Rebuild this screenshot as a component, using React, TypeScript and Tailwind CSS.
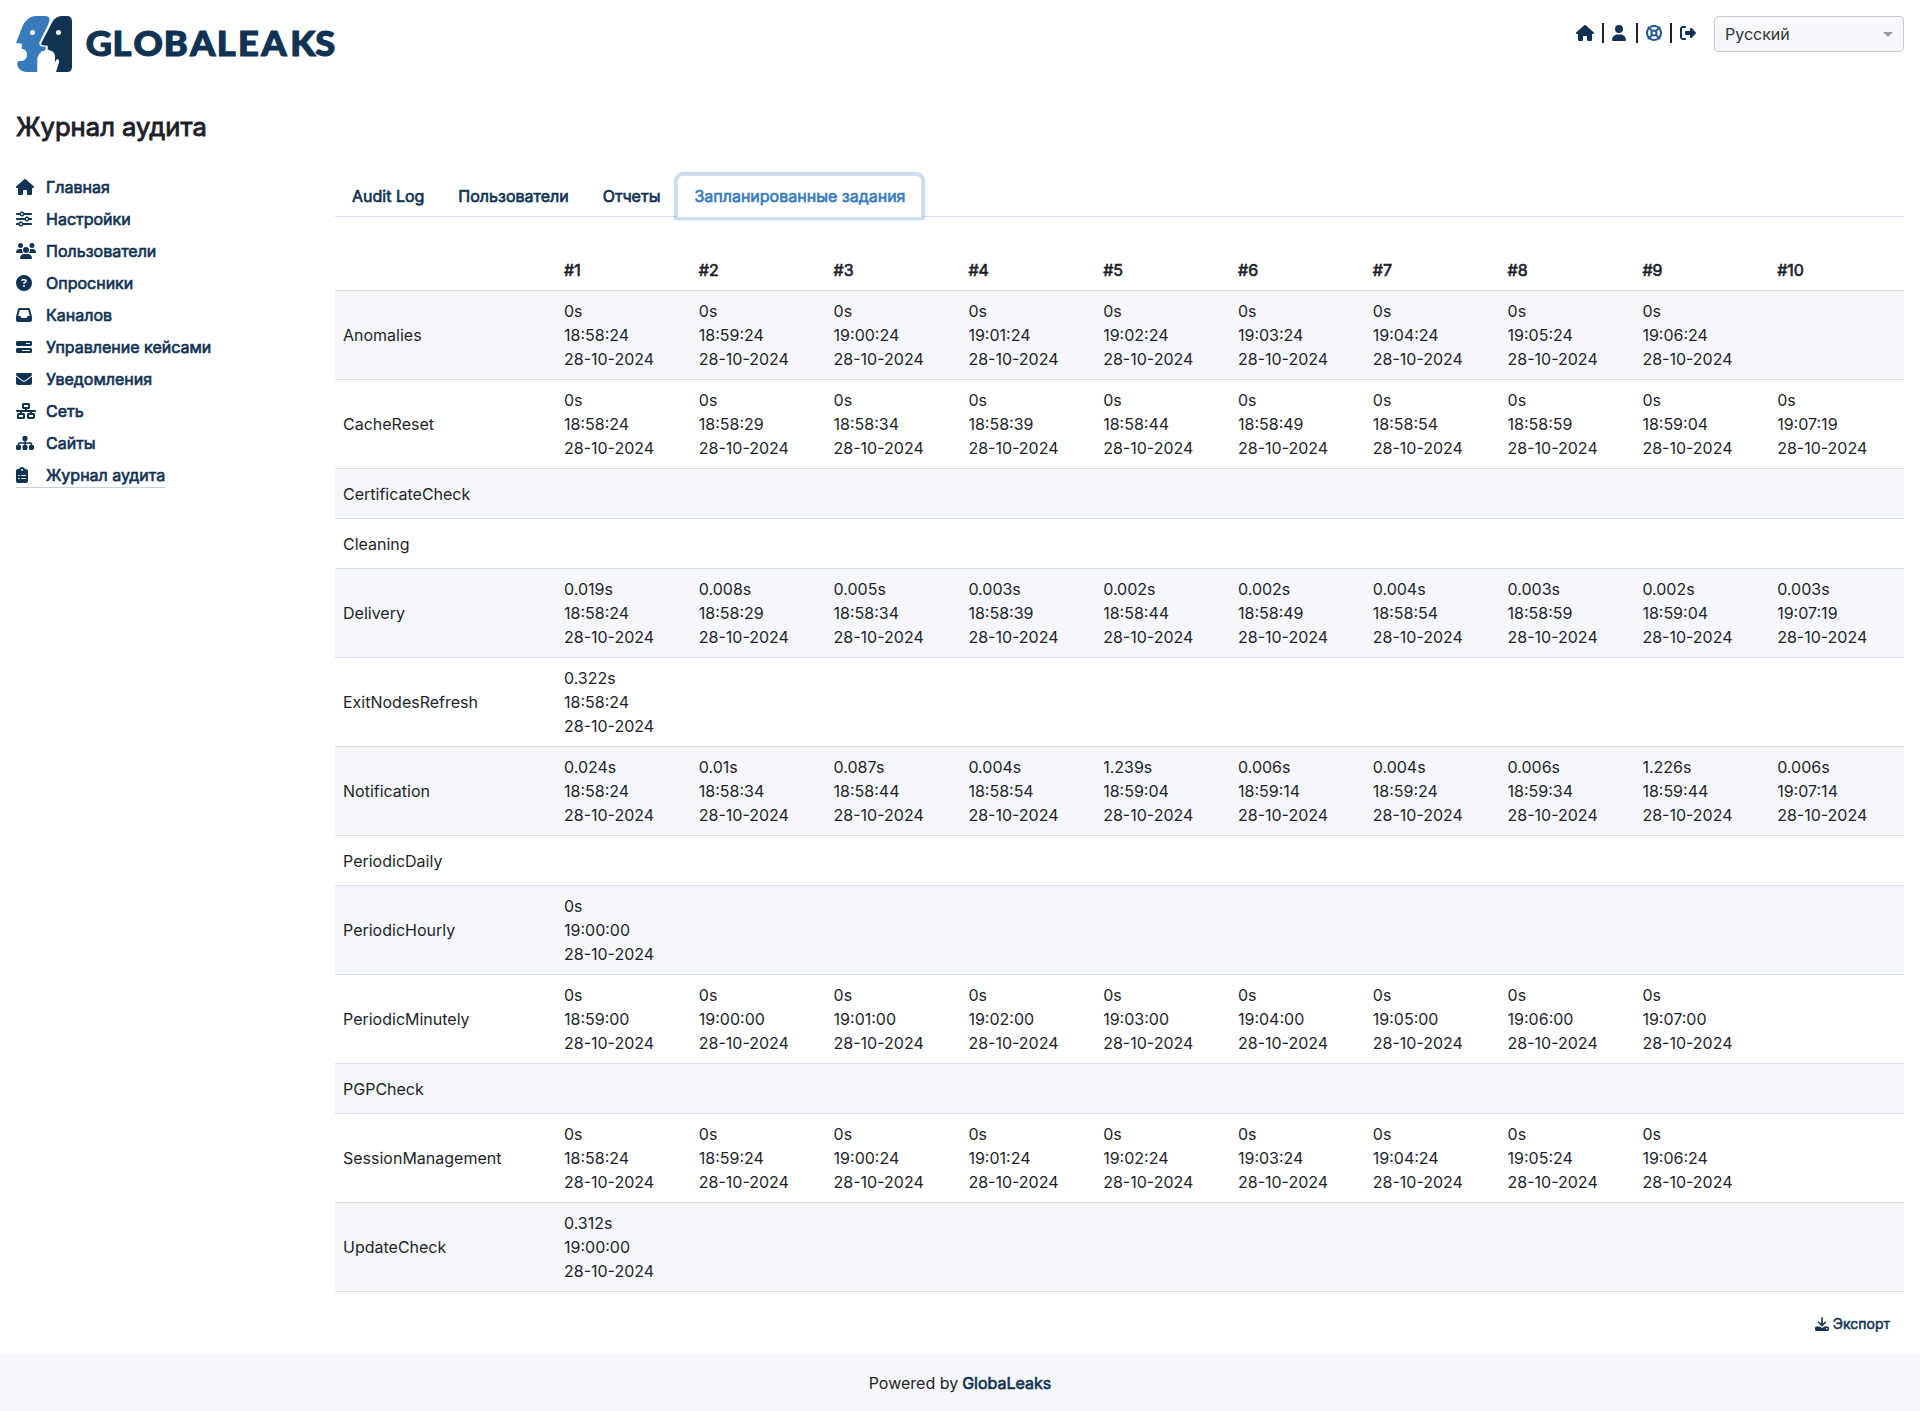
import {
  FaHouse, FaSliders, FaUsers, FaCircleQuestion, FaInbox, FaBarsProgress, FaEnvelope,
  FaNetworkWired, FaSitemap, FaClipboardList, FaUser, FaLifeRing, FaRightFromBracket,
} from "react-icons/fa6";

const D = "28-10-2024";

const rows: [string, string[]][] = [
  ["Anomalies", ["0s 18:58:24", "0s 18:59:24", "0s 19:00:24", "0s 19:01:24", "0s 19:02:24", "0s 19:03:24", "0s 19:04:24", "0s 19:05:24", "0s 19:06:24"]],
  ["CacheReset", ["0s 18:58:24", "0s 18:58:29", "0s 18:58:34", "0s 18:58:39", "0s 18:58:44", "0s 18:58:49", "0s 18:58:54", "0s 18:58:59", "0s 18:59:04", "0s 19:07:19"]],
  ["CertificateCheck", []],
  ["Cleaning", []],
  ["Delivery", ["0.019s 18:58:24", "0.008s 18:58:29", "0.005s 18:58:34", "0.003s 18:58:39", "0.002s 18:58:44", "0.002s 18:58:49", "0.004s 18:58:54", "0.003s 18:58:59", "0.002s 18:59:04", "0.003s 19:07:19"]],
  ["ExitNodesRefresh", ["0.322s 18:58:24"]],
  ["Notification", ["0.024s 18:58:24", "0.01s 18:58:34", "0.087s 18:58:44", "0.004s 18:58:54", "1.239s 18:59:04", "0.006s 18:59:14", "0.004s 18:59:24", "0.006s 18:59:34", "1.226s 18:59:44", "0.006s 19:07:14"]],
  ["PeriodicDaily", []],
  ["PeriodicHourly", ["0s 19:00:00"]],
  ["PeriodicMinutely", ["0s 18:59:00", "0s 19:00:00", "0s 19:01:00", "0s 19:02:00", "0s 19:03:00", "0s 19:04:00", "0s 19:05:00", "0s 19:06:00", "0s 19:07:00"]],
  ["PGPCheck", []],
  ["SessionManagement", ["0s 18:58:24", "0s 18:59:24", "0s 19:00:24", "0s 19:01:24", "0s 19:02:24", "0s 19:03:24", "0s 19:04:24", "0s 19:05:24", "0s 19:06:24"]],
  ["UpdateCheck", ["0.312s 19:00:00"]],
];

const menu = [
  { icon: FaHouse, size: "h-4 w-[18px]", label: "Главная" },
  { icon: FaSliders, size: "h-4 w-4", label: "Настройки" },
  { icon: FaUsers, size: "h-4 w-5", label: "Пользователи" },
  { icon: FaCircleQuestion, size: "h-4 w-4", label: "Опросники" },
  { icon: FaInbox, size: "h-4 w-4", label: "Каналов" },
  { icon: FaBarsProgress, size: "h-4 w-4", label: "Управление кейсами" },
  { icon: FaEnvelope, size: "h-4 w-4", label: "Уведомления" },
  { icon: FaNetworkWired, size: "h-4 w-5", label: "Сеть" },
  { icon: FaSitemap, size: "h-4 w-[18px]", label: "Сайты" },
  { icon: FaClipboardList, size: "h-4 w-3", label: "Журнал аудита", active: true },
];

const bold = "[-webkit-text-stroke:0.65px_currentColor]";

function Logo() {
  return (
    <svg width="324" height="56" viewBox="0 0 324 56" role="img" aria-label="GlobaLeaks">
      <path fill="#377bbc" d="M19 0H29Q34 0 33.500 4.500L32 9L23.500 26Q22.800 29 25 30.300L29.700 30.700V33.500Q29 35 25.500 35.500Q22 38 21.300 42V56H10Q3 55 1.500 50Q.7 46 3 45Q11 46 11 38Q10.500 33.500 5.700 32.700L6 27.700L0 27L6 11.500Q10 1 19 0Z" />
      <path fill="#103253" d="M46 0H51Q56 0 56 5.500V50.500Q56 56 51 56H40L43 46.500Q43 43 41.500 43Q40 43.300 39 46.500V40Q38.500 36 35 34.700L31.700 33.500V29.700L25.300 29L25.300 27.300L36 6.500Q39 .5 46 0Z" />
      <circle cx="16.500" cy="16.500" r="2.500" fill="#fff" />
      <circle cx="42.500" cy="16.500" r="2.500" fill="#fff" />
      <text x="64.700 89.400 108.800 136.900 161.200 185.900 205.600 227.200 253.900 277.200" y="40" transform="scale(1.080 1)" fill="#103253" stroke="#103253" strokeWidth="1.100" className="font-['Lato'] text-[33.500px] font-black">GLOBALEAKS</text>
    </svg>
  );
}

function DownloadIcon() {
  return (
    <svg width="14" height="14" viewBox="0 0 14 14" fill="none" stroke="currentColor" strokeWidth="1.600">
      <path strokeLinecap="round" d="M7 .8V8M3.600 5.200L7 8.600L10.400 5.200" />
      <path fill="currentColor" stroke="none" d="M1.500 9.600H4.600L7 11L9.400 9.600H12.500Q14 9.600 14 11V12.500Q14 14 12.500 14H1.500Q0 14 0 12.500V11Q0 9.600 1.500 9.600Z" />
      <circle cx="11.800" cy="11.800" r=".8" fill="#fff" stroke="none" />
    </svg>
  );
}

export default function App() {
  return (
    <div className="flex h-[1411px] flex-col bg-white font-['Inter','Liberation_Sans',sans-serif] text-base leading-6 text-[#1d1f2a]">
      <header className="flex h-[88px] items-start justify-between p-4">
        <Logo />
        <div className="flex items-start">
          <div className="mt-[5px] flex h-6 items-center text-[#103253]">
            <FaHouse className="h-4 w-[18px]" />
            <span className="ml-2 h-5 w-0.5 bg-[#1d1f2a]" />
            <FaUser className="ml-2 h-4 w-[14px]" />
            <span className="ml-2.5 h-5 w-0.5 bg-[#1d1f2a]" />
            <FaLifeRing className="ml-2 size-4 text-[#1f5a94]" />
            <span className="ml-2 h-5 w-0.5 bg-[#1d1f2a]" />
            <FaRightFromBracket className="ml-2 size-4" />
          </div>
          <div className="ml-[18px] flex h-9 w-[190px] items-center justify-between rounded border border-[#ccc] bg-[#f5f7fb] pr-2.5 pl-2.5 text-[#333]">
            Русский
            <span className="border-x-[5px] border-t-[5px] border-x-transparent border-t-[#999]" />
          </div>
        </div>
      </header>

      <h1 className="mt-[23px] ml-4 h-8 text-[25.600px] leading-8 [-webkit-text-stroke:0.9px_currentColor]">Журнал аудита</h1>

      <div className="mt-7 flex px-4">
        <nav className="flex w-[319px] shrink-0 flex-col items-start text-[#103253]">
          {menu.map(({ icon: Icon, size, label, active }) => (
            <a key={label} className={active ? "flex h-[29px] items-center border-b border-[#c3d0dd] pt-1" : "flex h-8 items-center"}>
              <span className="w-[30px]"><Icon className={size} /></span>
              <span className={bold}>{label}</span>
            </a>
          ))}
        </nav>

        <main className="min-w-0 grow">
          <div className={`mt-1 flex border-b border-[#d8deeb] text-[#103253] ${bold}`}>
            <a className="h-[41px] px-[17px] py-[9px]">Audit Log</a>
            <a className="h-[41px] px-[17px] py-[9px]">Пользователи</a>
            <a className="h-[41px] px-[17px] py-[9px]">Отчеты</a>
            <a className="-mb-px h-[42px] rounded-t-md border border-b-0 border-[#d8deeb] bg-white px-4 py-2 text-[#377bbc] shadow-[0_0_0_3.2px_rgba(55,123,188,0.25)]">Запланированные задания</a>
          </div>

          <table className="mt-8 w-full table-fixed border-collapse">
            <thead>
              <tr className="h-[41px] border-b border-[#d8deeb] text-left">
                <th className="w-[221px]" />
                {Array.from({ length: 10 }, (_, i) => (
                  <th key={i} className={`px-2 pt-[9px] pb-[7px] font-normal ${bold}`}>#{i + 1}</th>
                ))}
              </tr>
            </thead>
            <tbody>
              {rows.map(([name, cells]) => (
                <tr key={name} className="h-[50px] border-b border-[#d8deeb] odd:bg-[#f5f7fb]">
                  <td className={cells.length ? "px-2" : "px-2 pt-0.5"}>{name}</td>
                  {Array.from({ length: 10 }, (_, i) => (
                    <td key={i} className="px-2">
                      {cells[i] && (
                        <div className="py-2">
                          {cells[i].split(" ").map((t) => <div key={t}>{t}</div>)}
                          <div>{D}</div>
                        </div>
                      )}
                    </td>
                  ))}
                </tr>
              ))}
            </tbody>
          </table>

          <div className="mt-[22px] flex items-center justify-end gap-1 pr-3.5 text-sm text-[#103253]">
            <DownloadIcon />
            <span className="[-webkit-text-stroke:0.5px_currentColor]">Экспорт</span>
          </div>
        </main>
      </div>

      <footer className="mt-auto flex h-14 items-center justify-center gap-1 bg-[#f5f7fb]">
        Powered by <span className={`text-[#103253] ${bold}`}>GlobaLeaks</span>
      </footer>
    </div>
  );
}
